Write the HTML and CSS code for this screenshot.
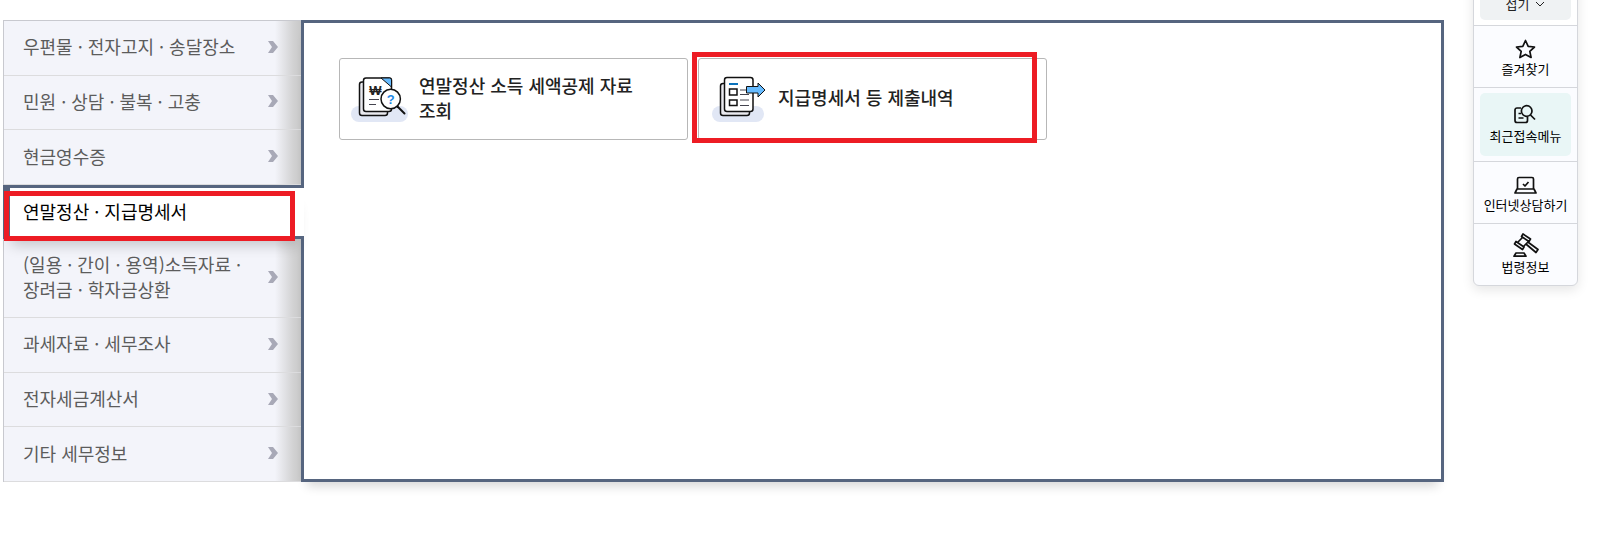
FILE: index.html
```html
<!DOCTYPE html>
<html lang="ko">
<head>
    <meta charset="UTF-8">
    <meta name="viewport" content="width=device-width, initial-scale=1.0">
    <title>연말정산 · 지급명세서</title>
    <link rel="stylesheet" href="styles.css">
</head>
<body>
    <div class="page">
        <main class="menu">
            <nav class="side-menu">
                <ul>
                    <li><a href="#">우편물 · 전자고지 · 송달장소 <svg class="chevron" viewBox="0 0 10 12"><path d="M0 0h5l5 6-5 6H0l4-6z"/></svg></a></li>
                    <li><a href="#">민원 · 상담 · 불복 · 고충 <svg class="chevron" viewBox="0 0 10 12"><path d="M0 0h5l5 6-5 6H0l4-6z"/></svg></a></li>
                    <li><a href="#">현금영수증 <svg class="chevron" viewBox="0 0 10 12"><path d="M0 0h5l5 6-5 6H0l4-6z"/></svg></a></li>
                    <li class="active"><a href="#">연말정산 · 지급명세서</a></li>
                    <li><a href="#">(일용 · 간이 · 용역)소득자료 ·<br>장려금 · 학자금상환 <svg class="chevron" viewBox="0 0 10 12"><path d="M0 0h5l5 6-5 6H0l4-6z"/></svg></a></li>
                    <li><a href="#">과세자료 · 세무조사 <svg class="chevron" viewBox="0 0 10 12"><path d="M0 0h5l5 6-5 6H0l4-6z"/></svg></a></li>
                    <li><a href="#">전자세금계산서 <svg class="chevron" viewBox="0 0 10 12"><path d="M0 0h5l5 6-5 6H0l4-6z"/></svg></a></li>
                    <li><a href="#">기타 세무정보 <svg class="chevron" viewBox="0 0 10 12"><path d="M0 0h5l5 6-5 6H0l4-6z"/></svg></a></li>
                </ul>
            </nav>

            <section class="panel">
                <a href="#" class="card">
                    <svg class="card-icon" viewBox="0 0 60 60">
                        <rect class="pill" x="1" y="37" width="57" height="16" rx="8"/>
                        <g class="line">
                            <rect class="back" x="9.5" y="13" width="28" height="33.5" rx="2.5"/>
                            <rect class="paper" x="13.5" y="9" width="28" height="33.5" rx="2.5"/>
                            <path class="blue thin" d="M31 9h8.5a2 2 0 0 1 2 2v7z"/>
                            <path class="grey" d="M19 30.5h10M19 35.5h7"/>
                            <circle class="paper" cx="40.7" cy="30" r="9.7"/>
                            <path class="handle" d="M47.5 37.5l7 7"/>
                        </g>
                        <text class="won" x="25.5" y="25.5">₩</text>
                        <text class="question" x="40.7" y="34.5">?</text>
                    </svg>
                    <span>연말정산 소득 세액공제 자료 조회</span>
                </a>
                <a href="#" class="card marked">
                    <svg class="card-icon" viewBox="0 0 60 60">
                        <rect class="pill" x="3" y="37" width="52" height="16" rx="8"/>
                        <g class="line">
                            <rect class="back" x="11.5" y="14.5" width="29" height="32" rx="2.5"/>
                            <rect class="paper" x="15.5" y="8.5" width="28.5" height="34" rx="2.5"/>
                            <path class="title" d="M20 15h9"/>
                            <path d="M20.5 20h7.5v6h-7.5zM20.5 31h7.5v5.5h-7.5z"/>
                            <path class="grey" d="M31 21h8M31 25.5h9M31 31h9M31 36.5h9"/>
                            <path class="blue thin" d="M37.5 17.5H49V14l7 7-7 7v-4H37.5z"/>
                        </g>
                    </svg>
                    <span>지급명세서 등 제출내역</span>
                </a>
            </section>
        </main>

        <aside class="quick-menu">
            <div class="quick-item fold">
                <button type="button">접기
                    <svg class="fold-icon" viewBox="0 0 10 10"><path d="M1 3l4 4 4-4"/></svg>
                </button>
            </div>
            <div class="quick-item">
                <a href="#">
                    <svg class="quick-icon" viewBox="0 0 24 24"><path d="M11.5 5.5l2.7 5.800 6.300.7-4.700 4.300 1.300 6.200-5.600-3.100-5.600 3.100 1.300-6.200L2.500 12l6.300-.7z"/></svg>
                    즐겨찾기
                </a>
            </div>
            <div class="quick-item current">
                <a href="#">
                    <svg class="quick-icon" viewBox="0 0 24 24">
                        <path d="M7 6H3a2 2 0 0 0-2 2v10.500a2 2 0 0 0 2 2h8.500a2 2 0 0 0 2-2V15M4.500 11.500H7M4.500 16h5"/>
                        <circle cx="12.700" cy="9" r="5.300"/>
                        <path d="M16.500 13l4.500 4.500"/>
                    </svg>
                    최근접속메뉴
                </a>
            </div>
            <div class="quick-item">
                <a href="#">
                    <svg class="quick-icon" viewBox="0 0 24 24">
                        <path d="M3.500 18V8A1.500 1.500 0 0 1 5 6.500h13A1.500 1.500 0 0 1 19.500 8v10M3 18h17l2 4H1zM9 13l2 2 3.500-4"/>
                    </svg>
                    인터넷상담하기
                </a>
            </div>
            <div class="quick-item">
                <a href="#">
                    <svg class="quick-icon" viewBox="0 0 24 24">
                        <path d="M9 1l7.500 5-1.500 2.500L7.500 3.500zM2 8.500l8 5.500-1.500 2.500-8-5.500zM8.500 4.500L3.500 9.500M14.500 8.500L9.500 13.500M12.500 11.500l9.500 8 2-3-9.500-7M2 20h8l2 3.200H0z"/>
                    </svg>
                    법령정보
                </a>
            </div>
        </aside>
    </div>
</body>
</html>
```
FILE: styles.css
```css
* {
    margin: 0;
    padding: 0;
    box-sizing: border-box;
}

body {
    background: #fff;
    color: #222;
    font-family: 'Noto Sans CJK KR', 'Noto Sans', sans-serif;
    font-size: 18px;
    line-height: 25px;
    word-break: keep-all;
}

a {
    color: inherit;
    text-decoration: none;
}

ul {
    list-style: none;
}

.page {
    display: flex;
    align-items: flex-start;
    gap: 29px;
    padding: 0 23px 0 3px;
    overflow: hidden;
    min-height: 100vh;
}

.menu {
    flex: 1;
    display: flex;
    margin-top: 20px;
}

/* left category list */
.side-menu {
    width: 298px;
    display: flex;
}

.side-menu ul {
    flex: 1;
    display: flex;
    flex-direction: column;
    border-top: 1px solid #c8c9cf;
    border-left: 1px solid #c8c9cf;
}

.side-menu li {
    flex: 1 0 auto;
    display: flex;
    background: linear-gradient(to left, #c8c8c8, #d2d2d3 8px, #f3f4fa 26px);
    border-bottom: 1px solid #dcdcde;
}

.side-menu a {
    flex: 1;
    display: flex;
    align-items: center;
    justify-content: space-between;
    padding: 13px 23px 15px 19px;
    color: #5c5c5c;
}

.side-menu .active {
    position: relative;
    z-index: 1;
    margin-left: -1px;
    margin-right: -3px;
    background: #fff;
    border-top: 3px solid #56657f;
    border-bottom: 3px solid #56657f;
    border-left: 7px solid #56657f;
    box-shadow: 0 14px 14px -8px rgba(0, 0, 0, 0.2);
}

.side-menu .active a {
    padding: 11px 13px;
    color: #000;
}

.side-menu .active::after {
    content: '';
    position: absolute;
    top: 3px;
    right: 9px;
    bottom: -5px;
    left: -6px;
    border: 5px solid #ed1c24;
}

.chevron {
    width: 10px;
    height: 12px;
    flex: none;
    fill: #a8a9b7;
}

/* content panel */
.panel {
    flex: 1;
    display: grid;
    grid-template-columns: repeat(3, 1fr);
    align-content: start;
    gap: 10px;
    min-height: 462px;
    padding: 35px;
    border: 3px solid #56657f;
    box-shadow: 0 10px 10px -6px rgba(0, 0, 0, 0.16);
}

.card {
    display: flex;
    align-items: center;
    gap: 9px;
    position: relative;
    min-height: 82px;
    padding: 10px 24px 10px 10px;
    border: 1px solid #b7b7b7;
    border-radius: 3px;
    font-weight: 500;
}

.card span {
    padding-bottom: 3px;
}

.marked::after {
    content: '';
    position: absolute;
    top: -7px;
    right: 9px;
    bottom: -4px;
    left: -7px;
    border: 5px solid #ed1c24;
}

.card-icon {
    width: 60px;
    height: 60px;
    flex: none;
}

.pill {
    fill: #e1e7f5;
}

.line {
    fill: none;
    stroke: #111;
    stroke-width: 1.5;
}

.back {
    fill: #e9e9ee;
}

.paper {
    fill: #fff;
}

.blue {
    fill: #66bbff;
}

.thin {
    stroke-width: 1;
}

.grey {
    stroke: #44444f;
    stroke-width: 1;
}

.title {
    stroke: #0a72bb;
    stroke-width: 2;
}

.handle {
    stroke-width: 2;
    stroke-linecap: round;
}

.won,
.question {
    font-family: 'Liberation Sans', sans-serif;
    font-size: 13px;
    font-weight: 700;
    text-anchor: middle;
    fill: #222;
}

.question {
    fill: #1e88e5;
}

/* quick menu on the right */
.quick-menu {
    width: 105px;
    margin-top: -20px;
    background: #fbfcff;
    border: 1px solid #d5d7dc;
    border-radius: 6px;
    box-shadow: 0 4px 12px rgba(0, 0, 0, 0.1);
    font-size: 13px;
    line-height: 18px;
}

.quick-item {
    padding: 5px 6px;
    border-bottom: 1px solid #d5d7dc;
}

.quick-item:last-child {
    border-bottom: none;
}

.quick-item a {
    display: flex;
    flex-direction: column;
    align-items: center;
    gap: 1px;
    padding: 4px 0;
    color: #000;
    white-space: nowrap;
}

.fold {
    background: #fff;
}

.fold button {
    width: 100%;
    height: 34px;
    display: flex;
    align-items: center;
    justify-content: center;
    gap: 6px;
    padding-top: 2px;
    background: #eff2f3;
    border: none;
    border-radius: 5px;
    color: #222;
    font: inherit;
}

.fold-icon {
    width: 10px;
    height: 10px;
    fill: none;
    stroke: #222;
}

.quick-item.current a {
    padding: 9px 0 11px;
    background: #e9f6f6;
    border-radius: 5px;
}

.quick-icon {
    width: 24px;
    height: 24px;
    overflow: visible;
    fill: none;
    stroke: #111;
    stroke-width: 1.7;
    stroke-linejoin: round;
}
```
